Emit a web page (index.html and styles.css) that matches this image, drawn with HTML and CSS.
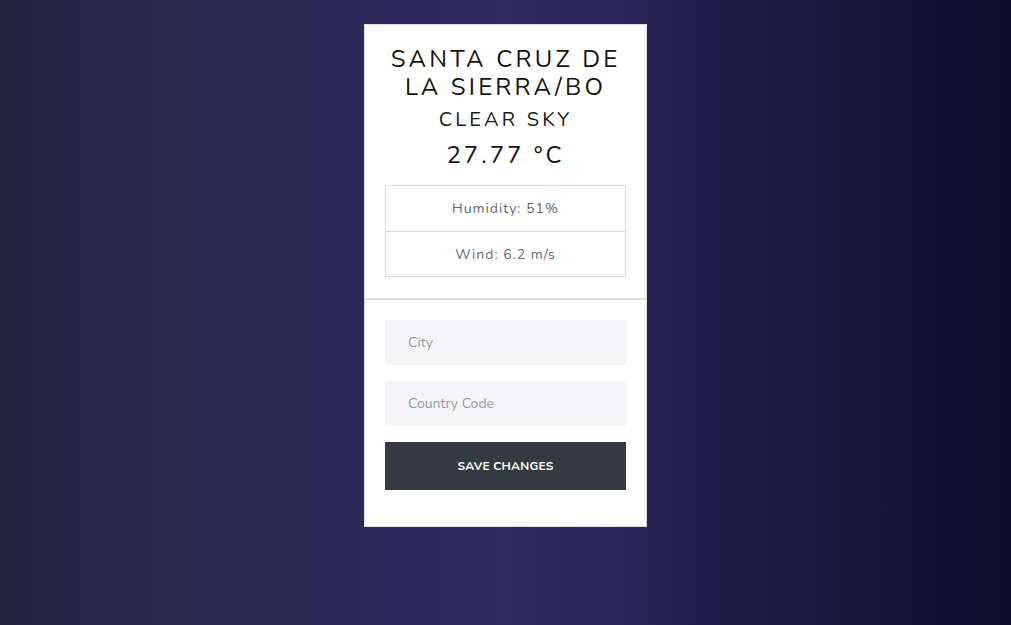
FILE: index.html
```html
<!DOCTYPE html>
<html lang="en">
<head>
<meta charset="utf-8">
<title>Weather</title>
<link rel="stylesheet" href="styles.css">
</head>
<body>
<main class="page">
  <section class="card">
    <div class="card-top">
      <h1 class="city">SANTA CRUZ DE LA SIERRA/BO</h1>
      <p class="desc">CLEAR SKY</p>
      <p class="temp">27.77 °C</p>
      <ul class="stats">
        <li class="stat">Humidity: 51%</li>
        <li class="stat">Wind: 6.2 m/s</li>
      </ul>
    </div>
    <form class="card-form">
      <input class="field" type="text" placeholder="City">
      <input class="field" type="text" placeholder="Country Code">
      <button class="btn" type="button">SAVE CHANGES</button>
    </form>
  </section>
</main>
</body>
</html>
```
FILE: styles.css
```css
* { box-sizing: border-box; }
html, body { margin: 0; height: 100%; }
body {
  background: linear-gradient(to right, #24243e, #302b63, #0f0c29);
  font-family: "Nunito", "Lato", "Open Sans", sans-serif;
  color: #111;
}
.page {
  display: flex;
  justify-content: center;
  padding-top: 24px;
}
.card {
  width: 283px;
  background: #fff;
  border: 1px solid #dcdcdc;
}
.card-top {
  padding: 20px 20px 21px;
  text-align: center;
  border-bottom: 2px solid #dedede;
}
.city {
  margin: 0 -6px;
  font-size: 24px;
  font-weight: 400;
  letter-spacing: 3.2px;
  line-height: 28px;
  color: #121212;
}
.desc {
  margin: 6px 0 0;
  font-size: 20px;
  letter-spacing: 3.2px;
  line-height: 26px;
  color: #1a1a1a;
}
.temp {
  margin: 7px 0 0;
  font-size: 24px;
  letter-spacing: 3px;
  line-height: 30px;
  color: #111;
}
.stats {
  list-style: none;
  margin: 15px 0 0;
  padding: 0;
  border: 1px solid #dcdcdc;
}
.stat {
  height: 45px;
  display: flex;
  align-items: center;
  justify-content: center;
  font-size: 14px;
  letter-spacing: 1px;
  color: #5f6670;
}
.stat + .stat { border-top: 1px solid #dcdcdc; }
.card-form {
  display: flex;
  flex-direction: column;
  gap: 16px;
  padding: 20px 20px 36px;
}
.field {
  height: 45px;
  border: none;
  background: #f5f5f7;
  padding: 0 23px;
  font-family: inherit;
  font-size: 14px;
  color: #333;
  outline: none;
}
.field::placeholder { color: #959c9e; }
.btn {
  height: 48px;
  border: none;
  background: #343a40;
  color: #fff;
  font-family: inherit;
  font-size: 12px;
  font-weight: 700;
  letter-spacing: 0.2px;
}
```
